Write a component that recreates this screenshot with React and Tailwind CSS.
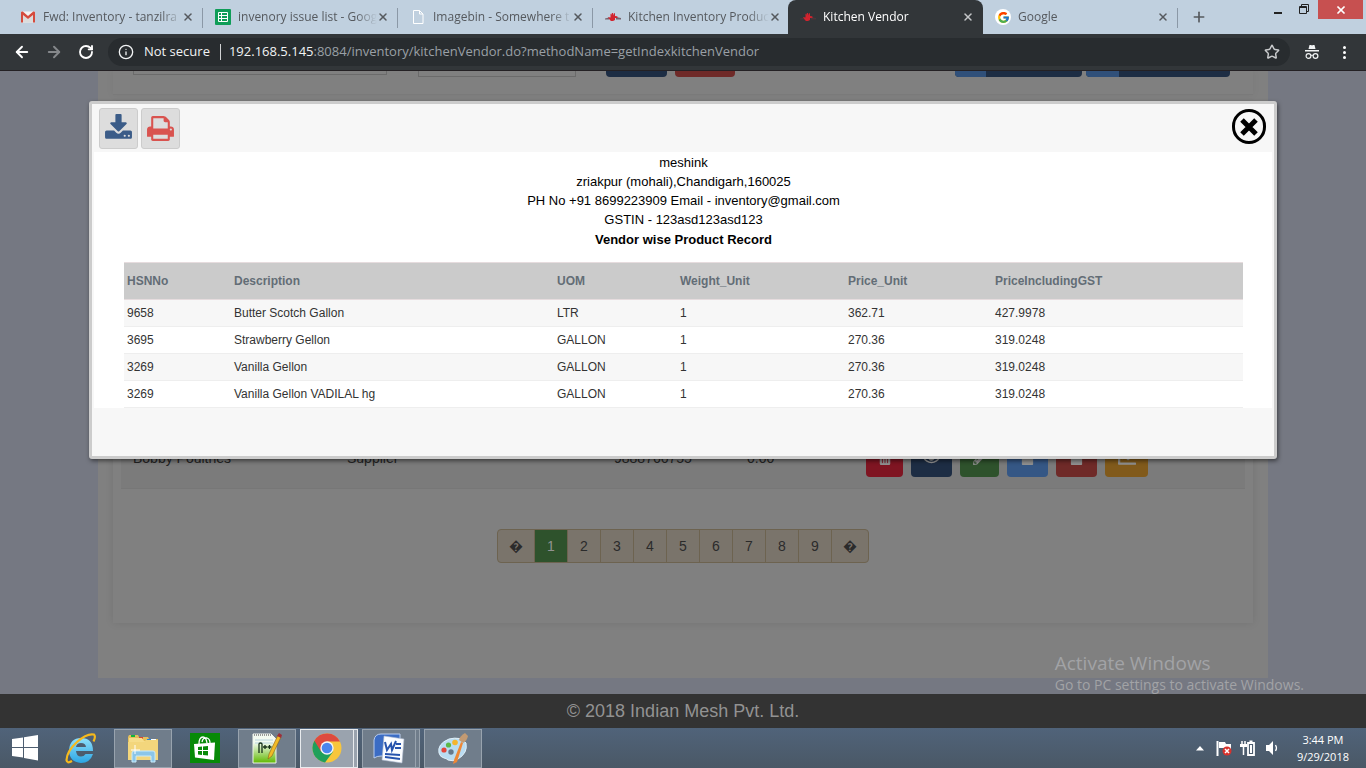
import React from "react";
import { ArrowLeft, ArrowRight, RotateCw, Info, Star, X, Plus } from "lucide-react";
import { FaTrashAlt, FaRegEye, FaPencilAlt, FaFile, FaChartLine } from "react-icons/fa";
import { FcGoogle } from "react-icons/fc";

const GmailIcon = () => (
  <svg viewBox="0 0 16 16" className="h-4 w-4">
    <path d="M1 2.500h14v11H1z" fill="#f2f2f2" />
    <path d="M3 13.500V6l5 4 5-4v7.500z" fill="#dcdcdc" />
    <path d="M1 13.500V3.500q0-1 1-1h.8L8 7l5.200-4.500h.8q1 0 1 1v10h-2V6L8 10 3 6v7.500z" fill="#d54b3d" />
  </svg>
);

const SheetIcon = () => (
  <svg viewBox="0 0 16 16" className="h-4 w-4">
    <rect width="16" height="16" rx="1" fill="#0f9d58" />
    <path d="M3.500 3.500h9v9h-9zM3.500 6.500h9M3.500 9.500h9M6.500 3.500v9" fill="none" stroke="#fff" />
  </svg>
);

const BlankPageIcon = () => (
  <svg viewBox="0 0 16 16" className="h-4 w-4">
    <path d="M3.500 1.500h6l3.500 3.500v9.500H3.500zM9.500 1.500V5H13" fill="none" stroke="#fff" />
  </svg>
);

const ChefIcon = () => (
  <svg viewBox="0 0 16 16" className="h-4 w-4">
    <path d="M0 9.500l4-1v2H0zM11 8l5 1v1.500h-5z" fill="#57343c" opacity=".7" />
    <path d="M3 8l2.500.5V5l1-.5.5 2V4h1v2.500L9 4l1 .5V7l2 .2 1 1-1.500.8L10 9v2l-2 1H6l-1.500-1.500z" fill="#d2232e" />
  </svg>
);

const GoogleIcon = () => (
  <span className="flex h-4 w-4 items-center justify-center rounded-full bg-white">
    <FcGoogle size={13} />
  </span>
);

const IncognitoIcon = () => (
  <svg viewBox="0 0 16 16" className="h-4 w-4 shrink-0" fill="#f1f3f4">
    <path d="M4.500 5L5.500 1h1.500l1 .6L9 1h1.500l1 4zM1 6h14v1.500H1z" />
    <path d="M7 11.500q1-.8 2 0" fill="none" stroke="#f1f3f4" />
    <circle cx="4.500" cy="12" r="2.400" fill="none" stroke="#f1f3f4" strokeWidth="1.200" />
    <circle cx="11.500" cy="12" r="2.400" fill="none" stroke="#f1f3f4" strokeWidth="1.200" />
  </svg>
);

const DownloadIcon = () => (
  <svg viewBox="0 0 1664 1792" className="h-[29px] w-[27px]" fill="#3b5c88">
    <path d="M1280 1344q0-26-19-45t-45-19-45 19-19 45 19 45 45 19 45-19 19-45zm256 0q0-26-19-45t-45-19-45 19-19 45 19 45 45 19 45-19 19-45zm128-224v320q0 40-28 68t-68 28h-1472q-40 0-68-28t-28-68v-320q0-40 28-68t68-28h465l135 136q58 56 136 56t136-56l136-136h464q40 0 68 28t28 68zm-325-569q17 41-14 70l-448 448q-18 19-45 19t-45-19l-448-448q-31-29-14-70 17-39 59-39h256v-448q0-26 19-45t45-19h256q26 0 45 19t19 45v448h256q42 0 59 39z" />
  </svg>
);

const PrintIcon = () => (
  <svg viewBox="0 0 1664 1792" className="h-[29px] w-[27px]" fill="#d9534f">
    <path d="M384 1536h896v-256h-896v256zm0-640h896v-384h-160q-40 0-68-28t-28-68v-160h-640v640zm1152 64q0-26-19-45t-45-19-45 19-19 45 19 45 45 19 45-19 19-45zm128 0v416q0 13-9.500 22.500t-22.500 9.500h-224v160q0 40-28 68t-68 28h-960q-40 0-68-28t-28-68v-160h-224q-13 0-22.500-9.500t-9.500-22.500v-416q0-79 56.500-135.500t135.500-56.500h64v-544q0-40 28-68t68-28h672q40 0 88 20t76 48l152 152q28 28 48 76t20 88v256h64q79 0 135.500 56.500t56.500 135.500z" />
  </svg>
);

const WindowsLogo = () => (
  <svg viewBox="0 0 26 26" className="h-[26px] w-[26px]" fill="#fff">
    <path d="M0 4l11-1.500V12H0zM12 2.300L26 0v12H12zM0 13h11v9.500L0 21zM12 13h14v12.500L12 23z" />
  </svg>
);

const ExplorerEIcon = () => (
  <svg viewBox="0 0 32 32" className="h-8 w-8">
    <defs>
      <linearGradient id="ie" x1="0" y1="0" x2="0" y2="1">
        <stop offset="0" stopColor="#8fe0fb" />
        <stop offset="1" stopColor="#2ba5e4" />
      </linearGradient>
    </defs>
    <path
      d="M29 19H12q.5 5.500 5 5.500 3 0 4.500-2.500H29Q26 31 17 31 5 30 5 18 6 6 17 6q12 0 12 13zM12 15h10q-.5-4-5-4-4.300 0-5 4z"
      fill="url(#ie)"
    />
    <path
      d="M8 29q-5 3-5.500-1Q3 19 13 10T30 2.500q2 2-.5 7"
      fill="none"
      stroke="#f6b91c"
      strokeWidth="2.200"
    />
  </svg>
);

const FolderIcon = () => (
  <svg viewBox="0 0 32 30" className="h-[30px] w-8">
    <path d="M1 4l1-2h9l1 2h9l1 2h9v20H1z" fill="#e3bf5c" />
    <path d="M4 2h4v2H4z" fill="#12b53a" />
    <path d="M12 4h4v2h-4z" fill="#d8452f" />
    <path d="M2 5h13l2 3h14v18H2z" fill="#f6dd8a" />
    <path d="M20 6h9v2h-9z" fill="#fff" />
    <path d="M20 6h4v2h-4z" fill="#1f86e0" />
    <path d="M1 9h16l2-2h12v20H1z" fill="#f3d67c" />
    <path d="M5 29V20q0-2 2-2h19q2 0 2 2v9h-4v-6H9v6z" fill="#8cc6e8" stroke="#c8ebfb" />
    <path d="M8 12v9M4 17h9" stroke="#fff" />
  </svg>
);

const StoreIcon = () => (
  <svg viewBox="0 0 30 30" className="h-[30px] w-[30px]">
    <rect width="30" height="30" fill="#078a07" />
    <path d="M9 11q0-7 4-7 3 0 4 6M12 9q1-5 5-4 3 1 3 5" fill="none" stroke="#fff" strokeWidth="1.300" />
    <path d="M4 11l21-1.500L24 27 5 24.500z" fill="#fff" />
    <path d="M8 14l4-.4v3.400H8zM13 13.500l5-.4v3.900h-5zM8 18h4v3.900l-4-.5zM13 18h5v4.600l-5-.6z" fill="#078a07" />
  </svg>
);

const NotepadIcon = () => (
  <svg viewBox="0 0 32 32" className="h-8 w-8">
    <defs>
      <linearGradient id="np" x1="0" y1="0" x2="0" y2="1">
        <stop offset=".3" stopColor="#f3faf0" />
        <stop offset="1" stopColor="#5fb800" />
      </linearGradient>
    </defs>
    <path d="M2 2h18l5 5v24H2z" fill="url(#np)" stroke="#eef3ea" />
    <path d="M3 3h17" stroke="#999" strokeDasharray="1 1" strokeWidth="2" />
    <path d="M4 8h18M4 11h18" stroke="#b8d4dc" />
    <path d="M8 21v-9q0-1 1.500-1t1.500 1v9M12 15h4M14 13v4M16.500 15h4M18.500 13v4" fill="none" stroke="#173019" strokeWidth="1.300" />
    <path d="M27 3l3 2-9 19-4 3 1-5z" fill="#f1bb27" stroke="#8a6218" strokeWidth=".6" />
    <path d="M28 1l3 2-1 3-4-2z" fill="#9c2f3a" />
  </svg>
);

const ChromeIcon = () => (
  <svg viewBox="0 0 30 30" className="h-[30px] w-[30px]">
    <circle cx="15" cy="15" r="14.500" fill="#f8c63c" />
    <path d="M15 15L2.400 7.700A14.500 14.500 0 0 0 13 29.400L21.200 18.500z" fill="#1fa05a" />
    <path d="M15 8.500h13A14.500 14.500 0 0 0 2.400 7.700L9 18.500z" fill="#de4b3f" />
    <circle cx="15" cy="15" r="6.700" fill="#f5f5f5" />
    <circle cx="15" cy="15" r="5.300" fill="#4a86ee" />
  </svg>
);

const WordIcon = () => (
  <svg viewBox="0 0 32 32" className="h-8 w-8">
    <path d="M1 26V8q1-6 7-6h19v22H8q-4 0-7 2z" fill="#3b6cc4" stroke="#b9cdee" />
    <path d="M11 4l20 3-2 24-20-3z" fill="#fafcff" stroke="#a9b7cc" strokeWidth=".6" />
    <path d="M12 10l2 8 4-6 1 6 4-9" fill="none" stroke="#2653ad" strokeWidth="2" />
    <path d="M23 12h5M22 16h6M12 22l15 1M12 25l15 2" stroke="#2653ad" strokeWidth="1.800" />
  </svg>
);

const PaintIcon = () => (
  <svg viewBox="0 0 32 32" className="h-8 w-8">
    <path d="M2 21Q0 12 12 7q12-3 17 4 2 10-8 16-5 3-10 1-2-2-4-2-4-1-5-5z" fill="#b9dcf2" stroke="#e2f1fa" />
    <circle cx="14" cy="20" r="2.700" fill="#66798c" />
    <circle cx="7" cy="18" r="2.600" fill="#e2463b" />
    <circle cx="11.500" cy="13" r="2.600" fill="#5cb848" />
    <circle cx="18" cy="10.500" r="2.800" fill="#f5b52e" />
    <path d="M24 10l2 1-6 19-4 2 1-4z" fill="#ee8736" />
    <path d="M22 8q1-4 6-7l3 3q-1 5-5 7z" fill="#c39a72" />
  </svg>
);

const browserTabs = [
  { title: "Fwd: Inventory - tanzilra", icon: <GmailIcon />, divider: true },
  { title: "invenory issue list - Goog", icon: <SheetIcon />, divider: true },
  { title: "Imagebin - Somewhere t", icon: <BlankPageIcon />, divider: true },
  { title: "Kitchen Inventory Produc", icon: <ChefIcon /> },
  { title: "Kitchen Vendor", icon: <ChefIcon />, active: true },
  { title: "Google", icon: <GoogleIcon />, divider: true },
];

const products = [
  ["9658", "Butter Scotch Gallon", "LTR", "1", "362.71", "427.9978"],
  ["3695", "Strawberry Gellon", "GALLON", "1", "270.36", "319.0248"],
  ["3269", "Vanilla Gellon", "GALLON", "1", "270.36", "319.0248"],
  ["3269", "Vanilla Gellon VADILAL hg", "GALLON", "1", "270.36", "319.0248"],
];

const columns = [
  { name: "HSNNo", width: "w-[107px]" },
  { name: "Description", width: "w-[323px]" },
  { name: "UOM", width: "w-[123px]" },
  { name: "Weight_Unit", width: "w-[168px]" },
  { name: "Price_Unit", width: "w-[147px]" },
  { name: "PriceIncludingGST", width: "" },
];

const rowActions = [
  { label: "Delete", style: "w-[37px] bg-[#7f1522]", icon: <FaTrashAlt size={14} /> },
  { label: "View", style: "w-[41px] bg-[#1d2d44]", icon: <FaRegEye size={17} /> },
  { label: "Edit", style: "w-[39px] bg-[#2e522c]", icon: <FaPencilAlt size={14} /> },
  { label: "Products", style: "w-[41px] bg-[#355785]", icon: <FaFile size={15} /> },
  { label: "Report", style: "w-[41px] bg-[#6f2a28]", icon: <FaFile size={15} /> },
  { label: "Chart", style: "w-[43px] bg-[#815a1b]", icon: <FaChartLine size={18} /> },
];

const TabStrip = () => (
  <header className="flex h-[34px] shrink-0 bg-[#c0d0df] pl-2 font-['Open_Sans',sans-serif] text-xs text-[#55595e]">
    {browserTabs.map((tab) => (
      <div
        key={tab.title}
        className={`relative flex w-[195px] min-w-0 items-center pr-[9px] pl-3 ${
          tab.active ? "rounded-t-lg bg-[#323639] text-white" : ""
        }`}
      >
        <span className="shrink-0">{tab.icon}</span>
        <span className="ml-[7px] flex-1 mask-r-from-85% whitespace-nowrap">{tab.title}</span>
        <button aria-label="Close tab" className={`shrink-0 ${tab.active ? "text-[#c4c6c8]" : ""}`}>
          <X size={12} strokeWidth={3} />
        </button>
        {tab.divider && <span className="absolute top-2 right-0 h-5 w-px bg-[#8b98a6]" />}
      </div>
    ))}
    <button aria-label="New tab" className="ml-[9px] px-1">
      <Plus size={16} strokeWidth={2.500} />
    </button>
    <div className="mr-[3px] ml-auto flex items-start text-black">
      <button aria-label="Minimize" className="mt-3 mr-[17px] h-[2px] w-2 bg-[#222]" />
      <button aria-label="Restore" className="mt-1 mr-[9px]">
        <svg viewBox="0 0 10 10" className="h-[10px] w-[10px]" fill="none" stroke="#222">
          <path d="M.5 2.500h7v7h-7zM2.500 2V.5h7v7H8M.5 3.500h7" />
        </svg>
      </button>
      <button aria-label="Close window" className="flex h-[19px] w-[45px] items-center justify-center bg-[#c75050] text-white">
        <X size={12} strokeWidth={3.500} />
      </button>
    </div>
  </header>
);

const AddressBar = () => (
  <nav className="flex h-[37px] shrink-0 items-center border-b border-[#242124] bg-[#323639] pr-[14px] pl-[13px] font-['Open_Sans',sans-serif]">
    <button aria-label="Back" className="text-white">
      <ArrowLeft size={18} strokeWidth={2.500} />
    </button>
    <button aria-label="Forward" className="ml-[14px] text-[#85888b]">
      <ArrowRight size={18} strokeWidth={2.500} />
    </button>
    <button aria-label="Reload" className="ml-[15px] text-white">
      <RotateCw size={16} strokeWidth={2.800} />
    </button>
    <div className="ml-[14px] flex h-7 min-w-0 flex-1 items-center rounded-full bg-[#282c2f] pr-[10px] pl-[10px] text-[13px] text-[#f1f3f4]">
      <Info size={16} className="shrink-0" />
      <span className="ml-[10px] shrink-0">Not secure</span>
      <span className="ml-[10px] h-4 w-px shrink-0 bg-[#d0d2d4]" />
      <span className="ml-2 flex-1 truncate text-[#9aa0a6]">
        <span className="text-[#f1f3f4]">192.168.5.145</span>
        :8084/inventory/kitchenVendor.do?methodName=getIndexkitchenVendor
      </span>
      <button aria-label="Bookmark" className="text-[#c8cacc]">
        <Star size={16} strokeWidth={2.200} />
      </button>
    </div>
    <span className="ml-[14px]">
      <IncognitoIcon />
    </span>
    <button aria-label="Menu" className="ml-4 flex w-4 flex-col items-center gap-[2px]">
      <span className="h-[3px] w-[3px] rounded-full bg-white" />
      <span className="h-[3px] w-[3px] rounded-full bg-white" />
      <span className="h-[3px] w-[3px] rounded-full bg-white" />
    </button>
  </nav>
);

const FilterBar = () => (
  <div className="flex h-6 items-start border-b border-[#7a7a7a] pr-[23px] pl-5 shadow-[0_0_8px_rgba(0,0,0,0.05)]">
    <div className="h-1 w-[254px] border border-t-0 border-[#6b6b6b]" />
    <div className="ml-[31px] h-[6px] w-[158px] border border-t-0 border-[#6b6b6b]" />
    <div className="ml-[30px] h-[6px] w-[61px] rounded-b bg-[#1d2d44]" />
    <div className="ml-2 h-[6px] w-[60px] rounded-b bg-[#6f2a28]" />
    <div className="ml-auto h-[6px] w-[127px] overflow-hidden rounded-b bg-[#1d2d44]">
      <div className="h-full w-[31px] bg-[#30507a]" />
    </div>
    <div className="ml-1 h-[6px] w-[144px] overflow-hidden rounded-b bg-[#1d2d44]">
      <div className="h-full w-[33px] bg-[#30507a]" />
    </div>
  </div>
);

const VendorPanel = () => (
  <div className="mt-[10px] flex flex-1 flex-col justify-end px-2 pb-[60px] shadow-[0_0_8px_rgba(0,0,0,0.1)]">
    <table className="w-full table-fixed text-left text-sm text-[#242424]">
      <tbody>
        <tr className="h-[61px] border-b border-[#777] bg-[#7b7b7b]">
          <td className="w-[214px] pl-3">Bobby Poultries</td>
          <td className="w-[267px] pl-3">Supplier</td>
          <td className="w-[133px] pl-3">9888766755</td>
          <td className="w-[119px] pl-3">0.00</td>
          <td className="pl-3">
            <div className="flex gap-2">
              {rowActions.map((action) => (
                <button
                  key={action.label}
                  aria-label={action.label}
                  className={`flex h-[39px] items-center justify-center rounded text-[#929292] ${action.style}`}
                >
                  {action.icon}
                </button>
              ))}
            </div>
          </td>
        </tr>
      </tbody>
    </table>
    <div className="mt-10 flex justify-center">
      <div className="flex h-[34px] divide-x divide-[#6d6350] overflow-hidden rounded border border-[#6d6350] bg-[#7a746b] text-sm text-[#2b2b2b]">
        <button aria-label="Previous" className="w-[37px]">�</button>
        {[1, 2, 3, 4, 5, 6, 7, 8, 9].map((page) => (
          <button key={page} className={`w-[33px] ${page === 1 ? "bg-[#2e522c] text-[#929292]" : ""}`}>
            {page}
          </button>
        ))}
        <button aria-label="Next" className="w-9">�</button>
      </div>
    </div>
  </div>
);

const ProductModal = () => (
  <section
    role="dialog"
    aria-label="Vendor wise Product Record"
    className="absolute inset-x-[89px] top-[30px] rounded-[3px] border-[3px] border-[#ccc] bg-[#f7f7f7] px-[2px] shadow-[1px_2px_4px_rgba(0,0,0,0.5)]"
  >
    <div className="flex h-12 items-start pt-1 pr-[6px] pl-[5px]">
      <button aria-label="Download" className="flex h-[41px] w-[39px] items-center justify-center rounded-[3px] border border-[#ccc] bg-[#ddd]">
        <DownloadIcon />
      </button>
      <button aria-label="Print" className="ml-[3px] flex h-[41px] w-[39px] items-center justify-center rounded-[3px] border border-[#ccc] bg-[#ddd]">
        <PrintIcon />
      </button>
      <button aria-label="Close" className="mt-[1px] ml-auto flex h-[35px] w-[34px] items-center justify-center rounded-full border-[3px] border-black">
        <svg viewBox="0 0 18 18" className="h-[18px] w-[18px]" stroke="#000" strokeWidth="5">
          <path d="M2 2l14 14M16 2L2 16" />
        </svg>
      </button>
    </div>
    <div className="bg-white pt-[1px] pr-[29px] pl-[30px] text-center text-[13px] leading-[19px] text-black">
      <p>meshink</p>
      <p>zriakpur (mohali),Chandigarh,160025</p>
      <p>PH No +91 8699223909 Email - inventory@gmail.com</p>
      <p>GSTIN - 123asd123asd123</p>
      <h1 className="mb-[11px] leading-[22px] font-bold">Vendor wise Product Record</h1>
      <table className="w-full table-fixed border-collapse text-left text-xs text-[#333]">
        <thead>
          <tr className="h-[37px] border-y border-[#e6dcde] bg-[#cbcbcb] text-[#636d76]">
            {columns.map((col) => (
              <th key={col.name} className={`pl-[3px] font-bold ${col.width}`}>
                {col.name}
              </th>
            ))}
          </tr>
        </thead>
        <tbody>
          {products.map((row, i) => (
            <tr key={i} className="h-[27px] border-b border-[#eee] odd:bg-[#f7f7f7]">
              {row.map((value, j) => (
                <td key={j} className="pl-[3px]">
                  {value}
                </td>
              ))}
            </tr>
          ))}
        </tbody>
      </table>
    </div>
    <div className="h-12" />
  </section>
);

const TaskButton = ({ label, stacked, active, children }) => (
  <div className="flex h-[39px]">
    <button
      aria-label={label}
      className={`flex items-center justify-center border ${stacked ? "w-[54px]" : "w-[58px]"} ${
        active ? "border-[#e8ebee] bg-[#9aa3ae]" : "border-[#98a3ae] bg-[#707d8b]"
      }`}
    >
      {children}
    </button>
    {stacked && (
      <span
        className={`w-[4px] border border-l-0 ${
          active ? "border-[#e8ebee] bg-[#9aa3ae]" : "border-[#98a3ae] bg-[#707d8b]"
        }`}
      />
    )}
  </div>
);

const Taskbar = () => (
  <footer className="flex h-10 shrink-0 items-center bg-linear-to-b from-[#50637a] to-[#4a5866] pr-[17px] pl-3 font-['Open_Sans',sans-serif] text-white">
    <button aria-label="Start">
      <WindowsLogo />
    </button>
    <button aria-label="Internet Explorer" className="mr-[18px] ml-[26px]">
      <ExplorerEIcon />
    </button>
    <TaskButton label="File Explorer">
      <FolderIcon />
    </TaskButton>
    <button aria-label="Store" className="mr-[18px] ml-[18px]">
      <StoreIcon />
    </button>
    <div className="flex gap-1">
      <TaskButton label="Notepad++">
        <NotepadIcon />
      </TaskButton>
      <TaskButton label="Chrome" stacked active>
        <ChromeIcon />
      </TaskButton>
      <TaskButton label="Word" stacked>
        <WordIcon />
      </TaskButton>
      <TaskButton label="Paint">
        <PaintIcon />
      </TaskButton>
    </div>
    <div className="ml-auto flex items-center">
      <svg viewBox="0 0 8 5" className="h-[5px] w-2" fill="#fff">
        <path d="M4 0l4 4.500H0z" />
      </svg>
      <svg viewBox="0 0 16 16" className="ml-3 h-4 w-4">
        <path d="M1.500 1v15" stroke="#fff" strokeWidth="2" />
        <path d="M3 2h6l1 2h5v6H9L8 8H3z" fill="#fff" />
        <circle cx="11" cy="11" r="4.500" fill="#d8322c" />
        <path d="M9 9l4 4M13 9l-4 4" stroke="#fff" strokeWidth="1.500" />
      </svg>
      <svg viewBox="0 0 16 16" className="ml-2 h-4 w-4" fill="none" stroke="#fff">
        <path d="M2 1v4M5 1v4" strokeWidth="1.500" />
        <path d="M0 4h7v3H0z" fill="#fff" stroke="none" />
        <path d="M3.500 6v9" strokeWidth="1.500" />
        <path d="M8 3h6v12H8z" strokeWidth="1.800" />
        <path d="M10 5h2v8h-2z" fill="#fff" stroke="none" />
        <path d="M9.500 1.500h3" strokeWidth="2" />
      </svg>
      <svg viewBox="0 0 14 16" className="ml-[10px] h-4 w-[14px]">
        <path d="M0 5h3l4-4v14l-4-4H0z" fill="#fff" />
        <path d="M9.500 5q2 3 0 6" fill="none" stroke="#fff" strokeWidth="1.300" />
      </svg>
      <div className="ml-[17px] text-center text-[11px] leading-[17px]">
        <p>3:44 PM</p>
        <p>9/29/2018</p>
      </div>
    </div>
  </footer>
);

export default function App() {
  return (
    <div className="flex h-screen flex-col overflow-hidden font-['Liberation_Sans',Arial,sans-serif]">
      <TabStrip />
      <AddressBar />
      <main className="relative flex min-h-0 flex-1 flex-col overflow-hidden bg-[#757882]">
        <div className="mx-auto mb-4 flex w-full max-w-[1170px] flex-1 flex-col bg-[#808080] px-[15px] pb-[55px]">
          <FilterBar />
          <VendorPanel />
        </div>
        <div className="flex h-[34px] items-center justify-center bg-[#333] text-lg text-[#929292]">
          © 2018 Indian Mesh Pvt. Ltd.
        </div>
        <ProductModal />
        <div className="absolute right-[62px] bottom-[33px] font-['Open_Sans',sans-serif] text-[#a2a3a6]">
          <p className="text-[19px] leading-6">Activate Windows</p>
          <p className="text-sm leading-5">Go to PC settings to activate Windows.</p>
        </div>
      </main>
      <Taskbar />
    </div>
  );
}
